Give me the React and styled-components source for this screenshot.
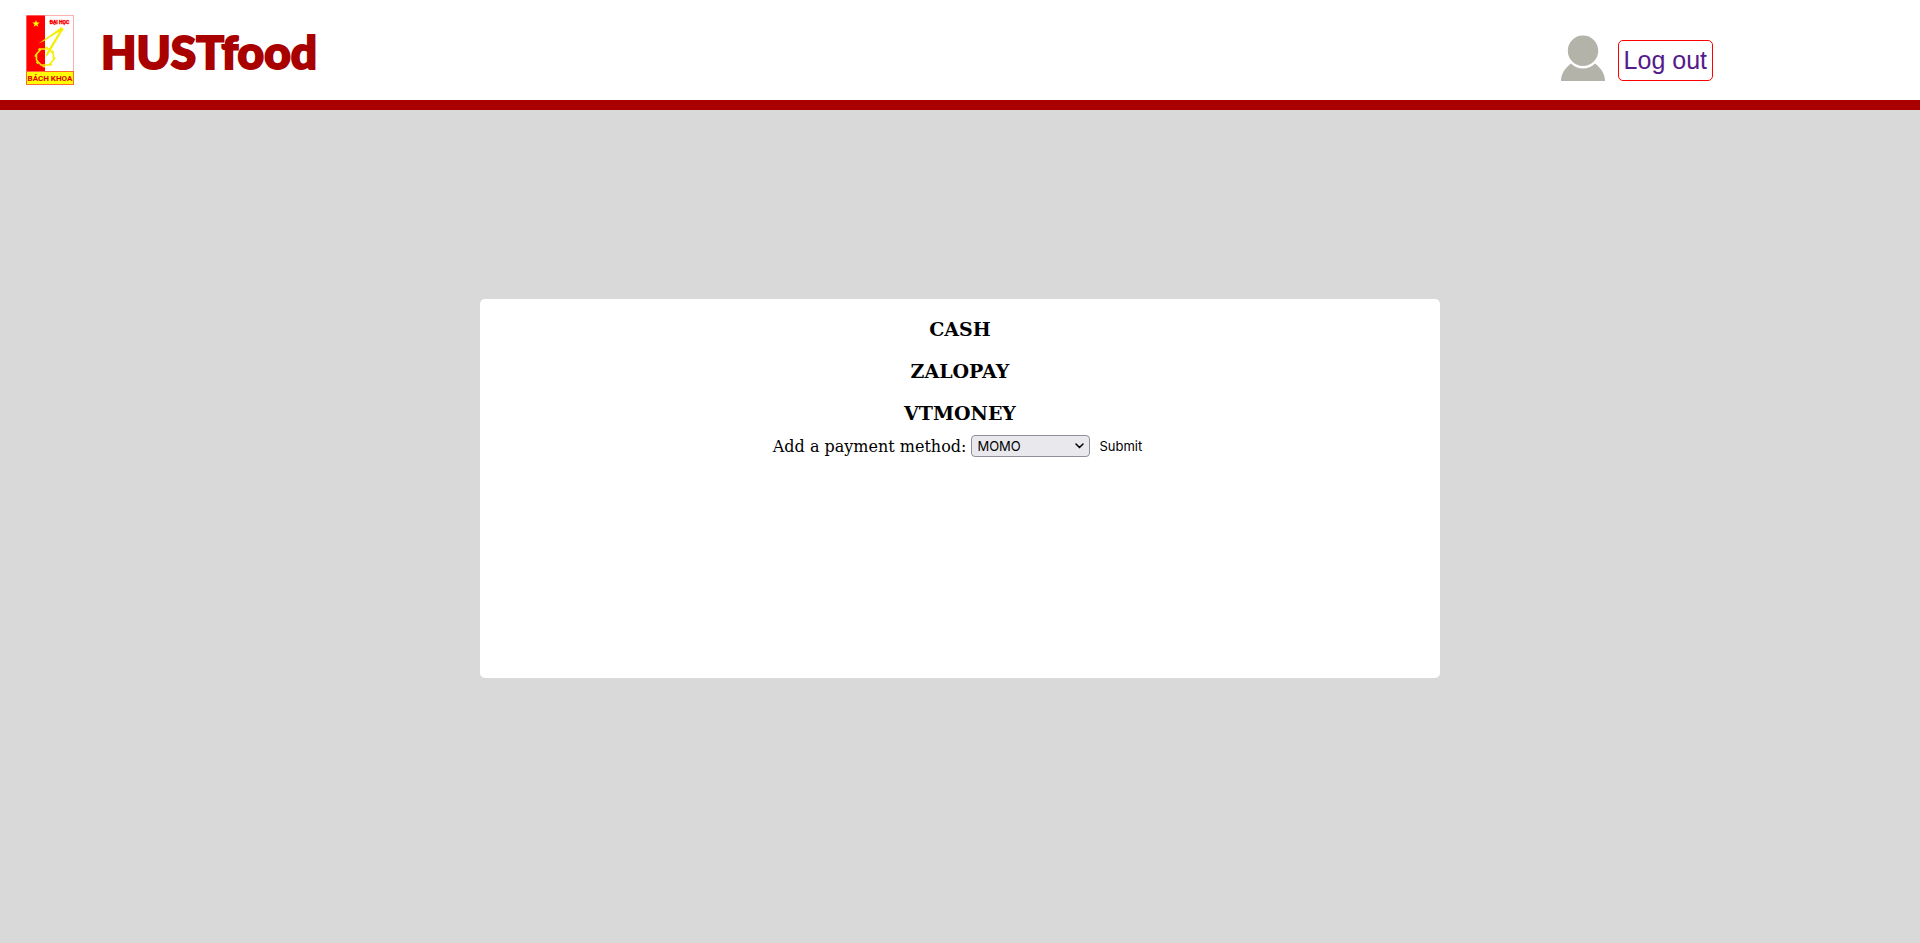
import React from "react";
import styled, { createGlobalStyle } from "styled-components";

const GlobalStyle = createGlobalStyle`
  body {
    margin: 0;
    background: #d9d9d9;
    color: #000;
    font-family: "DejaVu Serif", serif;
    font-size: 16px;
  }
`;

const Page = styled.div`
  display: flex;
  flex-direction: column;
  min-height: 100vh;
`;

const Header = styled.header`
  display: flex;
  align-items: center;
  justify-content: space-between;
  box-sizing: border-box;
  height: 110px;
  padding: 0 207px 0 26px;
  background: #fff;
  border-bottom: 10px solid #a90000;
`;

const Brand = styled.a`
  display: flex;
  align-items: center;
  gap: 25px;
  color: #a90000;
  text-decoration: none;
`;

const BrandName = styled.span`
  padding: 4px 0 0 2px;
  font-family: Lato, "Liberation Sans", sans-serif;
  font-size: 46px;
  font-weight: 900;
  line-height: 56px;
  -webkit-text-stroke: 2px #a90000;
`;

const Account = styled.div`
  display: flex;
  align-items: flex-end;
  gap: 13px;
  padding-top: 16px;
`;

const LogoutLink = styled.a`
  padding: 5px;
  border: 1px solid #f00;
  border-radius: 5px;
  color: #551a8b;
  font-family: "Liberation Sans", Arial, sans-serif;
  font-size: 25px;
  line-height: 29px;
  text-decoration: none;
`;

const Main = styled.main`
  display: flex;
  flex: 1;
  justify-content: center;
  align-items: flex-start;
  padding-top: 189px;
`;

const Panel = styled.section`
  box-sizing: border-box;
  width: 50%;
  min-height: 379px;
  padding-top: 19px;
  background: #fff;
  border-radius: 5px;
`;

const MethodList = styled.ul`
  display: flex;
  flex-direction: column;
  gap: 20px;
  margin: 0;
  padding: 0;
  list-style: none;
`;

const Method = styled.li`
  font-size: 19px;
  font-weight: 700;
  line-height: 22px;
  text-align: center;
`;

const PaymentForm = styled.form`
  display: flex;
  align-items: center;
  justify-content: center;
  margin-top: 11px;
`;

const SelectBox = styled.span`
  position: relative;
  display: flex;
  margin: 0 4px 0 5px;
`;

const Select = styled.select`
  appearance: none;
  box-sizing: border-box;
  width: 119px;
  height: 22px;
  padding: 0 5px;
  border: 1px solid #8f8f9d;
  border-radius: 4px;
  background: #e9e9ed;
  color: #000;
  font-family: Inter, sans-serif;
  font-size: 13px;
`;

const Chevron = styled.svg`
  position: absolute;
  top: 8px;
  right: 6px;
  pointer-events: none;
`;

const SubmitButton = styled.button`
  padding: 0 5px;
  border: 0;
  background: transparent;
  color: #000;
  font-family: Inter, sans-serif;
  font-size: 13px;
  line-height: 22px;
`;

const CREST_FONT = "Roboto, 'Liberation Sans', sans-serif";

function Crest() {
  return (
    <svg width="48" height="70" viewBox="0 0 48 70" aria-hidden="true">
      <rect x="0.5" y="0.5" width="47" height="69" fill="#fff" stroke="#ffb0b0" />
      <rect x="0.5" y="0.5" width="18.500" height="55.500" fill="#f00" />
      <path d="M10 5l1 2.500 2.700.1-2.200 1.600.8 2.600-2.300-1.500-2.300 1.500.8-2.600-2.200-1.600 2.700-.1z" fill="#ff0" />
      <g fill="none" stroke="#f5ee00">
        <path d="M15 34h8l4.500 5v6L23 50h-8l-4.500-5v-6z" strokeWidth="1.600" />
        <circle cx="19" cy="42" r="9.600" strokeWidth="1.600" strokeDasharray="2.500 5.040" />
      </g>
      <path d="M12.500 28.500L35 12.500l2 1.500-1 2.500L22 40l-2.500 2 1.500-5L33.500 16.500 18 26z" fill="#f5ee00" />
      <circle cx="35.500" cy="14.500" r="2" fill="#f5ee00" />
      <text x="33.500" y="9" textAnchor="middle" fontFamily={CREST_FONT} fontSize="5" fontWeight="700" fill="#f00" stroke="#f00" strokeWidth="0.4">ĐẠI HỌC</text>
      <rect x="0.500" y="56.500" width="47" height="13" fill="#ff0" stroke="#ff6a30" />
      <text x="24" y="66" textAnchor="middle" fontFamily={CREST_FONT} fontSize="8" fontWeight="700" fill="#e00000">BÁCH KHOA</text>
    </svg>
  );
}

function Avatar() {
  return (
    <svg width="44" height="46" viewBox="0 0 44 46" role="img" aria-label="Account">
      <g fill="#b3b3a9">
        <circle cx="22" cy="15.700" r="15.200" />
        <path d="M10 28.500C4 33 0 39 0 46h44C44 39 40 33 34 28.500Q29 33.500 22 33.500T10 28.500z" />
      </g>
    </svg>
  );
}

const methods = ["CASH", "ZALOPAY", "VTMONEY"];

export default function App() {
  return (
    <Page>
      <GlobalStyle />
      <Header>
        <Brand href="#">
          <Crest />
          <BrandName>HUSTfood</BrandName>
        </Brand>
        <Account>
          <Avatar />
          <LogoutLink href="#">Log out</LogoutLink>
        </Account>
      </Header>
      <Main>
        <Panel>
          <MethodList>
            {methods.map((name) => (
              <Method key={name}>{name}</Method>
            ))}
          </MethodList>
          <PaymentForm onSubmit={(event) => event.preventDefault()}>
            <label htmlFor="payment-method">Add a payment method:</label>
            <SelectBox>
              <Select id="payment-method" name="method">
                <option>MOMO</option>
              </Select>
              <Chevron width="9" height="6" viewBox="0 0 9 6" aria-hidden="true">
                <path d="M1 1l3.500 3.500L8 1" fill="none" stroke="#000" strokeWidth="1.500" strokeLinecap="round" />
              </Chevron>
            </SelectBox>
            <SubmitButton type="submit">Submit</SubmitButton>
          </PaymentForm>
        </Panel>
      </Main>
    </Page>
  );
}
